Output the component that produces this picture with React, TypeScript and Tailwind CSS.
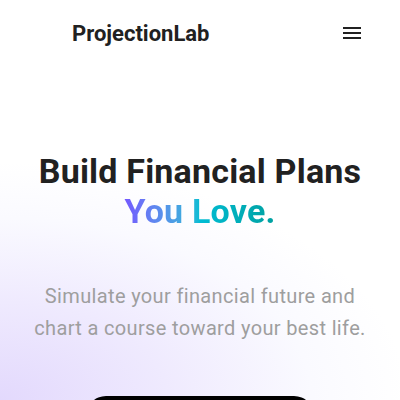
import React from "react";

export default function App() {
  return (
    <div
      className="relative w-full min-h-[400px] h-[400px] overflow-hidden bg-white bg-[radial-gradient(ellipse_120%_70%_at_0%_100%,#e3d9fd_0%,#efeafe_35%,#fafaff_65%,#ffffff_85%)]"
      style={{ fontFamily: "Roboto, 'Noto Sans', sans-serif" }}
    >
      <header className="flex h-[66px] items-center justify-between pl-[72px] pr-[36px]">
        <div className="text-[22px] font-bold text-[#212121]">ProjectionLab</div>
        <svg width="24" height="24" viewBox="0 0 24 24" className="text-[#212121]">
          <path d="M3 6h18v2H3zM3 11h18v2H3zM3 16h18v2H3z" fill="currentColor" />
        </svg>
      </header>
      <h1 className="mt-[85px] text-center text-[34px] leading-[40px] font-bold tracking-[0.2px] text-[#212121]">
        Build Financial Plans
        <br />
        <span className="bg-gradient-to-r from-[#7357ff] via-[#00bcd4] to-[#00a0a0] bg-clip-text text-transparent">
          You Love.
        </span>
      </h1>
      <p className="mt-[49px] text-center text-[20px] leading-[32px] tracking-[0.35px] text-[#9e9e9e]">
        Simulate your financial future and
        <br />
        chart a course toward your best life.
      </p>
      <div className="mt-[52px] flex justify-center">
        <button className="h-[52px] w-[228px] rounded-[20px] bg-black text-white text-[16px] font-medium">
          Get Started
        </button>
      </div>
    </div>
  );
}
